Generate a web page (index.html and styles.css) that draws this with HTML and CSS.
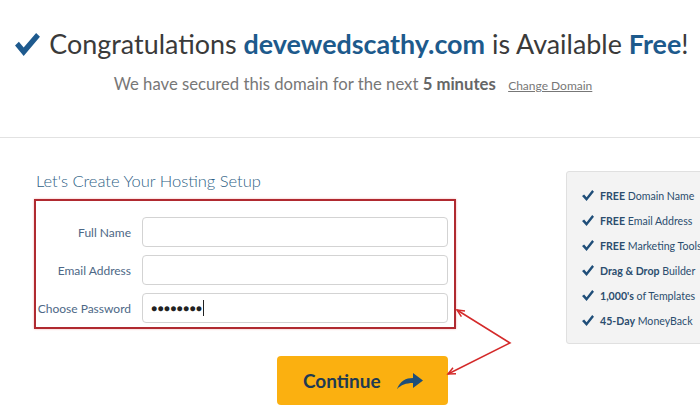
FILE: index.html
```html
<!DOCTYPE html>
<html lang="en">

<head>
    <meta charset="UTF-8">
    <meta name="viewport" content="width=device-width, initial-scale=1.0">
    <title>Domain Available</title>
    <link rel="stylesheet" href="styles.css">
</head>

<body>

    <div class="hero">
        <h1>
            <svg class="bigCheck" viewBox="0 0 26 24" width="25" height="23">
                <path d="M0 13 L4 9 L9 15 L22 0 L26 4 L9 24 Z" fill="#1e5a8e"/>
            </svg>
            Congratulations <b>devewedscathy.com</b> is Available <b>Free</b>!
        </h1>
        <p class="secured">We have secured this domain for the next <b>5 minutes</b> <a href="#">Change Domain</a></p>
    </div>
    <div class="divider"></div>

    <div class="main">
        <div class="setup">
            <h2>Let's Create Your Hosting Setup</h2>
            <div class="formBox">
                <div class="row">
                    <label for="name">Full Name</label>
                    <input id="name" type="text">
                </div>
                <div class="row">
                    <label for="email">Email Address</label>
                    <input id="email" type="text">
                </div>
                <div class="row">
                    <label for="pass">Choose Password</label>
                    <div class="fakeInput"><span class="dots">&#9679;&#9679;&#9679;&#9679;&#9679;&#9679;&#9679;&#9679;</span><span class="caret"></span></div>
                </div>
            </div>
            <div class="btnWrap">
                <button class="continue">Continue
                    <svg viewBox="0 0 26 16" width="26" height="16">
                        <path d="M0 16 C3 8 9 5 16 5 V0 L26 7.5 L16 15 V10 C9 10 4 12 0 16 Z" fill="#1d4e7a"/>
                    </svg>
                </button>
            </div>
        </div>

        <div class="perks">
            <div class="perk"><span class="tick"></span><b>FREE</b>&nbsp;Domain Name</div>
            <div class="perk"><span class="tick"></span><b>FREE</b>&nbsp;Email Address</div>
            <div class="perk"><span class="tick"></span><b>FREE</b>&nbsp;Marketing Tools</div>
            <div class="perk"><span class="tick"></span><b>Drag &amp; Drop</b>&nbsp;Builder</div>
            <div class="perk"><span class="tick"></span><b>1,000's</b>&nbsp;of Templates</div>
            <div class="perk"><span class="tick"></span><b>45-Day</b>&nbsp;MoneyBack</div>
        </div>

        <!-- red annotation arrows -->
        <svg class="pointer" width="90" height="90" viewBox="0 0 90 90">
            <g stroke="#d42a2a" stroke-width="1.5" fill="none" stroke-linejoin="miter">
                <polyline points="17,10 70,43 8,74"/>
                <polyline points="21.4,16.7 17,10 25,11"/>
                <polyline points="16,73.8 8,74 13,67.7"/>
            </g>
        </svg>
    </div>

</body>

</html>
```

FILE: styles.css
```css
body {
    margin: 0;
    font-family: Lato, "Open Sans", sans-serif;
    background-color: #fff;
    color: #333;
    overflow: hidden;
}

.hero {
    text-align: center;
    padding-top: 27px;
    height: 110px;
}

.hero h1 {
    margin: 0;
    font-size: 26.9px;
    font-weight: 400;
    color: #3a3a3a;
    white-space: nowrap;
    padding-left: 4px;
}

.hero h1 b {
    color: #1d5a8c;
    font-weight: 700;
}

.bigCheck {
    margin-right: 2px;
    vertical-align: -2px;
}

.secured {
    margin: 14px 0 0 0;
    font-size: 16.7px;
    color: #777;
    padding-left: 6px;
}

.secured b {
    color: #666;
}

.secured a {
    font-size: 12px;
    color: #777;
    margin-left: 8px;
}

.divider {
    border-top: 1px solid #e2e2e2;
}

.main {
    position: relative;
    display: flex;
    padding: 33px 0 0 34px;
}

.setup {
    width: 422px;
    flex-shrink: 0;
}

.setup h2 {
    margin: 0 0 8px 2px;
    font-size: 16.5px;
    font-weight: 300;
    color: #2f5f86;
}

.formBox {
    border: 2px solid #b02a30;
    padding: 16px 6px 4px 0;
    box-shadow: 0 0 2px rgba(230, 60, 60, 0.4);
}

.row {
    display: flex;
    align-items: center;
    margin-bottom: 8px;
}

.row:last-child {
    margin-bottom: 0;
}

.row label {
    width: 95px;
    text-align: right;
    font-size: 12px;
    color: #4d6886;
    margin-right: 11px;
    white-space: nowrap;
}

.row input,
.fakeInput {
    flex: 1;
    height: 28px;
    border: 1px solid #d3d3d3;
    border-radius: 4px;
    padding: 0;
    box-sizing: content-box;
    display: flex;
    align-items: center;
}

.dots {
    font-size: 10px;
    letter-spacing: 0.4px;
    color: #222;
    margin-left: 8px;
}

.caret {
    width: 1px;
    height: 16px;
    background: #222;
    margin-left: 1px;
}

.btnWrap {
    padding: 27px 0 0 243px;
}

.continue {
    width: 171px;
    height: 49px;
    border: none;
    border-radius: 4px;
    background-color: #fbb010;
    font-family: Lato, sans-serif;
    font-size: 19px;
    font-weight: 700;
    color: #1f3a52;
    display: flex;
    align-items: center;
    padding: 0 0 0 26px;
    gap: 16px;
}

.perks {
    margin-left: 110px;
    width: 150px;
    height: 173px;
    background-color: #f3f3f3;
    border: 1px solid #e0e0e0;
    border-radius: 3px;
    padding: 11px 0 0 15px;
    box-sizing: border-box;
    flex-shrink: 0;
}

.perk {
    display: flex;
    align-items: center;
    font-size: 10.6px;
    color: #2b4d6e;
    height: 25px;
    white-space: nowrap;
}

.perk b {
    font-weight: 700;
}

.tick {
    width: 12px;
    height: 11px;
    margin-right: 6px;
    background: #1f4e79;
    clip-path: polygon(0 55%, 18% 40%, 38% 65%, 85% 0, 100% 15%, 38% 100%);
}

.pointer {
    position: absolute;
    left: 440px;
    top: 162px;
}
```
